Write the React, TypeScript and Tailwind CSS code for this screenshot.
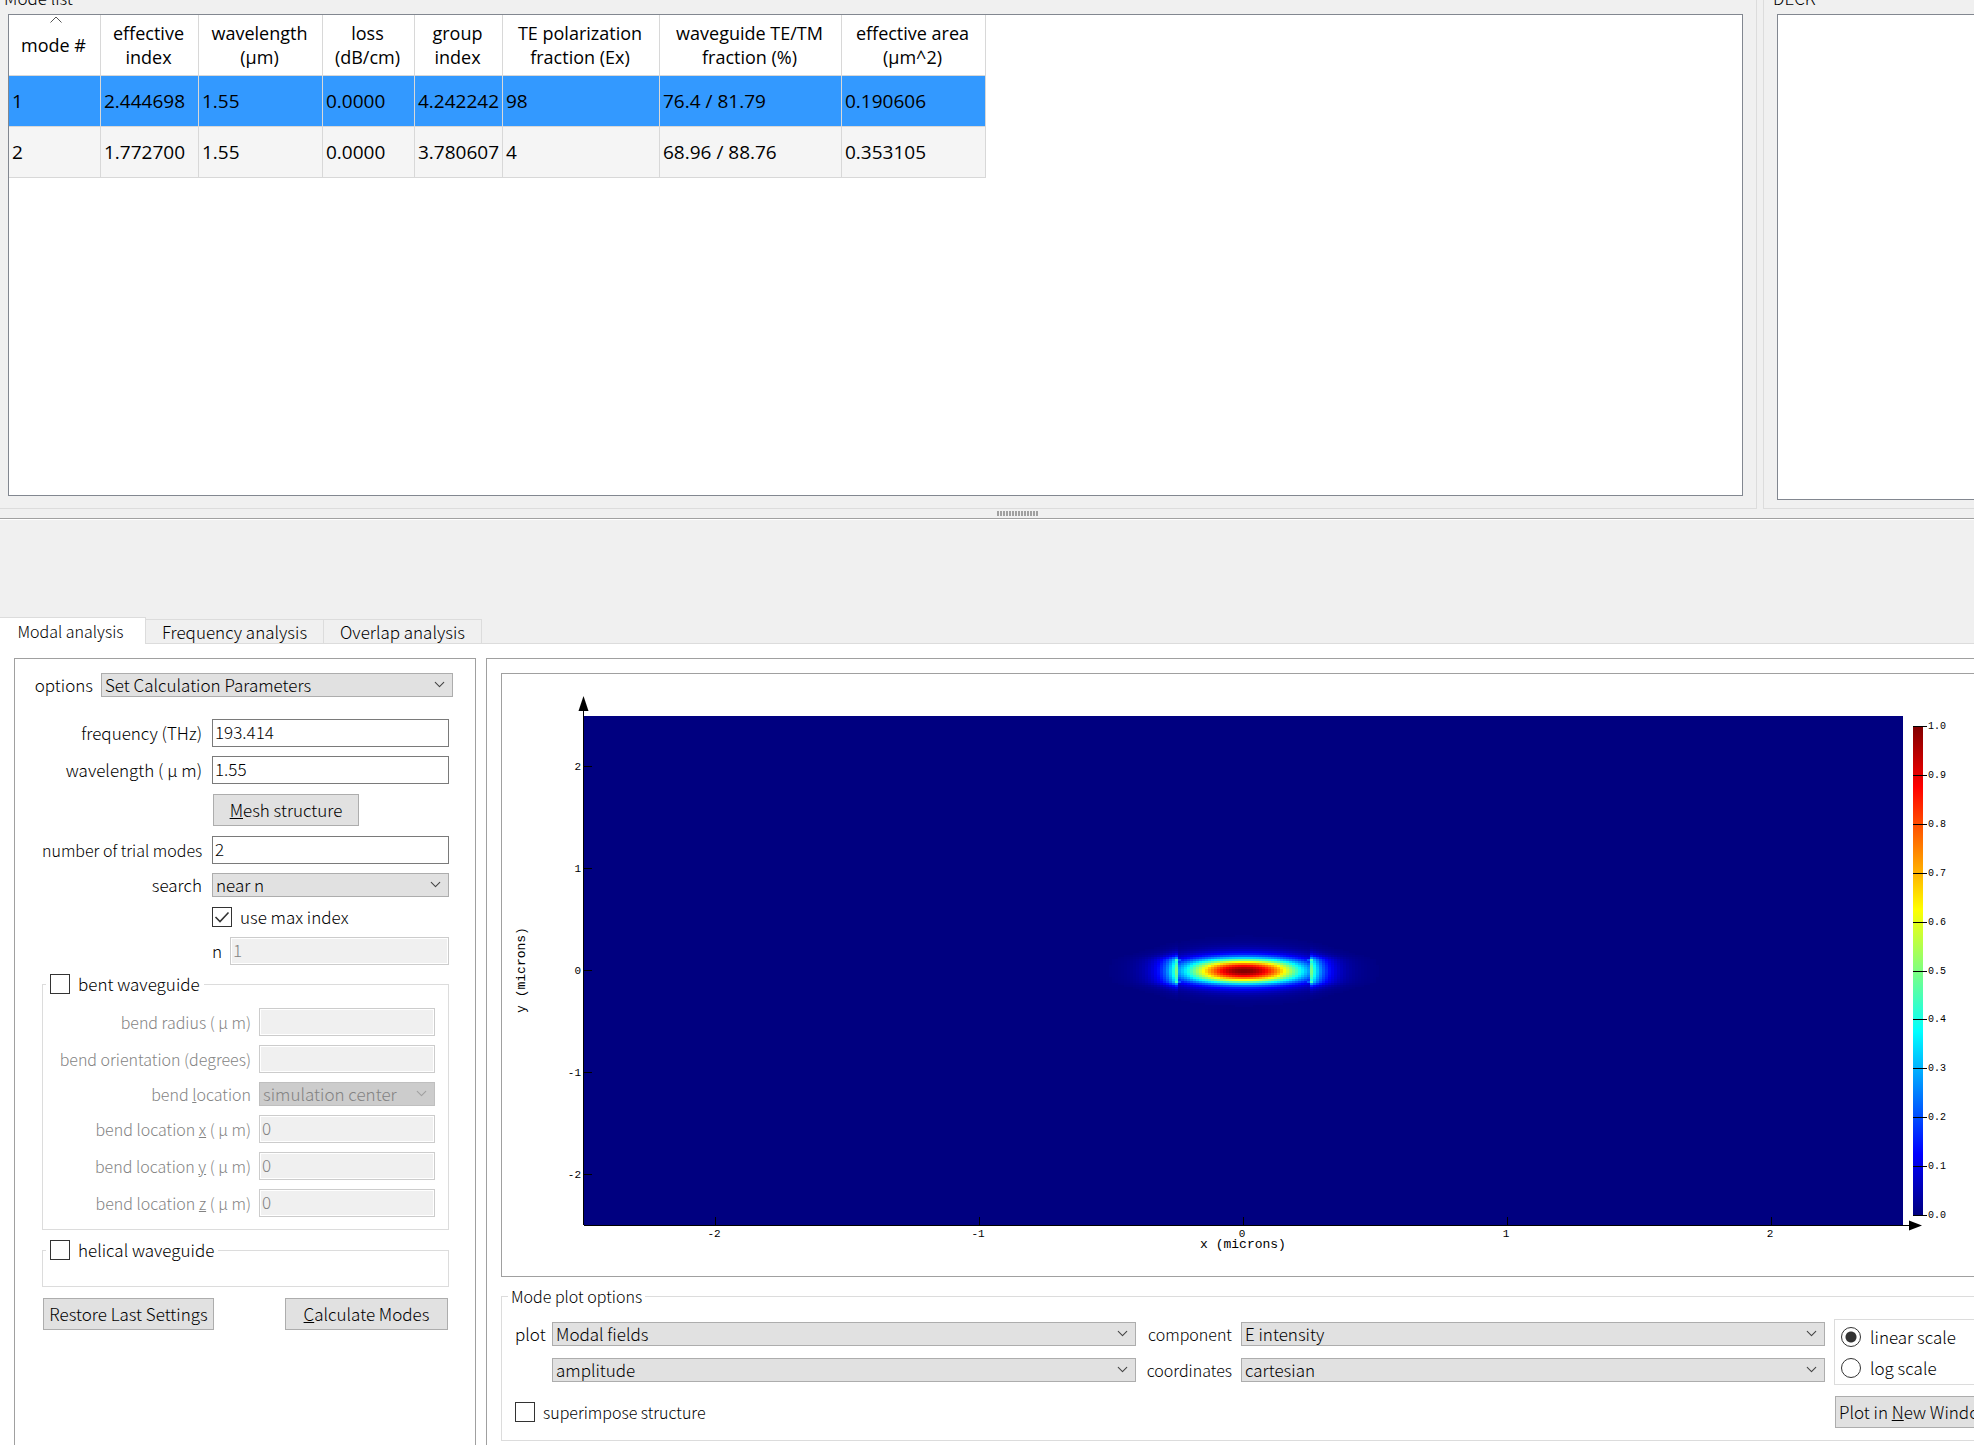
import type { ReactNode } from 'react';
import { ChevronDown } from 'lucide-react';
import clsx from 'clsx';

const COLUMNS = [
  { lines: ['mode #'], width: 'w-[92px]' },
  { lines: ['effective', 'index'], width: 'w-[98px]' },
  { lines: ['wavelength', '(µm)'], width: 'w-[124px]' },
  { lines: ['loss', '(dB/cm)'], width: 'w-[92px]' },
  { lines: ['group', 'index'], width: 'w-[88px]' },
  { lines: ['TE polarization', 'fraction (Ex)'], width: 'w-[157px]' },
  { lines: ['waveguide TE/TM', 'fraction (%)'], width: 'w-[182px]' },
  { lines: ['effective area', '(µm^2)'], width: 'w-[144px]' },
];

const MODES = [
  ['1', '2.444698', '1.55', '0.0000', '4.242242', '98', '76.4 / 81.79', '0.190606'],
  ['2', '1.772700', '1.55', '0.0000', '3.780607', '4', '68.96 / 88.76', '0.353105'],
];

function Select({ id, value, disabled, className }: { id: string; value: string; disabled?: boolean; className?: string }) {
  return (
    <div className={clsx('relative', className)}>
      <select
        id={id}
        aria-label={id}
        disabled={disabled}
        className={clsx(
          'block h-6 w-full appearance-none border pl-[3px] leading-[22px] opacity-100 outline-none',
          disabled ? 'border-[#bfbfbf] bg-[#cccccc] text-[#838383]' : 'border-[#adadad] bg-[#e1e1e1] text-black'
        )}
      >
        <option>{value}</option>
      </select>
      <ChevronDown
        className={clsx('pointer-events-none absolute right-[5px] top-[3px] h-[17px] w-[17px]', disabled ? 'text-[#a0a0a0]' : 'text-[#444]')}
        strokeWidth={1.5}
      />
    </div>
  );
}

function TextBox({ id, value, disabled, className }: { id: string; value: string; disabled?: boolean; className?: string }) {
  return (
    <input
      id={id}
      type="text"
      defaultValue={value}
      disabled={disabled}
      className={clsx(
        'block h-7 w-full min-w-0 border px-[2px] pb-1 outline-none',
        disabled ? 'border-[#cccccc] bg-[#f0f0f0] text-[#838383] shadow-[inset_0_0_0_1px_#fff]' : 'border-[#7a7a7a] bg-white',
        className
      )}
    />
  );
}

function CheckBox({ id, label, checked }: { id: string; label: string; checked?: boolean }) {
  return (
    <div className="flex h-5 items-center gap-2">
      <span className="relative h-5 w-5 shrink-0">
        <input id={id} type="checkbox" defaultChecked={checked} className="peer block h-5 w-5 appearance-none border border-[#333] bg-white" />
        <svg viewBox="0 0 20 20" className="pointer-events-none absolute inset-0 hidden h-5 w-5 peer-checked:block">
          <path d="M3.5 10 L8 14.5 L16.5 5.5" fill="none" stroke="#333" strokeWidth="1.6" />
        </svg>
      </span>
      <label htmlFor={id} className="leading-5">{label}</label>
    </div>
  );
}

function Button({ children, className }: { children: ReactNode; className?: string }) {
  return (
    <button type="button" className={clsx('h-8 whitespace-nowrap border border-[#adadad] bg-[#e1e1e1] leading-[30px]', className)}>
      {children}
    </button>
  );
}

function ModeTable() {
  return (
    <table className="w-[977px] table-fixed border-separate border-spacing-0 font-['Open_Sans','Noto_Sans',sans-serif] font-normal">
      <thead>
        <tr className="h-[61px] text-[18px]">
          {COLUMNS.map((col, i) => (
            <th key={i} className={clsx('relative border-b border-r border-[#d8d8d8] p-0 pr-[2px] align-middle font-normal leading-6', col.width)}>
              {i === 0 && (
                <svg viewBox="0 0 12 7" className="absolute left-[41px] top-px h-[7px] w-3">
                  <path d="M0.5 6.5 L6 1 L11.5 6.5" fill="none" stroke="#555" />
                </svg>
              )}
              {col.lines.map(line => (
                <div key={line} className="whitespace-nowrap">{line}</div>
              ))}
            </th>
          ))}
        </tr>
      </thead>
      <tbody className="text-[19px]">
        {MODES.map((row, r) => (
          <tr key={row[0]} className={clsx('h-[51px]', r === 0 ? 'bg-[#3399ff]' : 'bg-[#f5f5f5]')}>
            {row.map((cell, i) => (
              <td key={i} className="whitespace-nowrap border-b border-r border-[#d8d8d8] p-0 pl-[3px] align-middle">{cell}</td>
            ))}
          </tr>
        ))}
      </tbody>
    </table>
  );
}

const clamp = (v: number) => Math.max(0, Math.min(1, v));

function jet(v: number) {
  const r = Math.round(255 * clamp(1.5 - Math.abs(4 * v - 3)));
  const g = Math.round(255 * clamp(1.5 - Math.abs(4 * v - 2)));
  const b = Math.round(255 * clamp(1.5 - Math.abs(4 * v - 1)));
  return `rgb(${r},${g},${b})`;
}

// half size of the waveguide core
const CORE_X = 68;
const CORE_Y = 12;

function intensity(x: number, y: number) {
  const ax = Math.abs(x);
  const ay = Math.abs(y);
  const inside = ax < CORE_X - 2;
  const fx = inside ? 0.14 + 0.86 * Math.cos(0.0178 * ax) ** 2 : 0.48 * Math.exp(-(ax - CORE_X) / 14);
  const k = inside ? 0.073 : 0.05;
  const fy = ay <= CORE_Y ? Math.cos(k * ay) ** 2 : Math.cos(k * CORE_Y) ** 2 * Math.exp(-(ay - CORE_Y) / (inside ? 5 : 4));
  const corner = ax > CORE_X - 6 && ax < CORE_X + 1 && ay > 10 && ay < 12 ? 0.08 : 0;
  return Math.min(1, fx * fy + corner);
}

const CELL_W = 3;
const CELL_H = 2;
const cells: { x: number; y: number; fill: string }[] = [];
for (let x = -144; x < 144; x += CELL_W) {
  for (let y = -48; y < 48; y += CELL_H) {
    const v = intensity(x + CELL_W / 2, y + CELL_H / 2);
    if (v > 0.004) cells.push({ x, y, fill: jet(v) });
  }
}

const TICKS = [-2, -1, 0, 1, 2];

function FieldPlot() {
  return (
    <svg viewBox="0 0 1472 602" className="block w-full font-['Liberation_Mono',monospace]">
      <defs>
        <linearGradient id="jet" x1="0" y1="0" x2="0" y2="1">
          <stop offset="0" stopColor="#800000" />
          <stop offset="0.125" stopColor="#ff0000" />
          <stop offset="0.375" stopColor="#ffff00" />
          <stop offset="0.625" stopColor="#00ffff" />
          <stop offset="0.875" stopColor="#0000ff" />
          <stop offset="1" stopColor="#000080" />
        </linearGradient>
      </defs>

      <rect x="82" y="42" width="1319" height="509" fill="#000080" />
      <g transform="translate(742 297)" shapeRendering="crispEdges">
        {cells.map(c => (
          <rect key={`${c.x},${c.y}`} x={c.x} y={c.y} width={CELL_W} height={CELL_H} fill={c.fill} />
        ))}
      </g>

      {/* axes */}
      <g fill="#000" shapeRendering="crispEdges">
        <rect x="81" y="36" width="1" height="515" />
        <rect x="82" y="551" width="1326" height="1" />
        {TICKS.map(t => (
          <rect key={`x${t}`} x={741 + t * 264} y="543" width="1" height="8" />
        ))}
        {TICKS.map(t => (
          <rect key={`y${t}`} x="82" y={296 - t * 102} width="8" height="1" />
        ))}
      </g>
      <path d="M81.5 22 L86.5 37 H76.5 Z" />
      <path d="M1420 551.5 L1407 546.5 V556.5 Z" />
      <g fontSize="11">
        {TICKS.map(t => (
          <text key={`x${t}`} x={740 + t * 264} y="563" textAnchor="middle">{t}</text>
        ))}
        {TICKS.map(t => (
          <text key={`y${t}`} x="79" y={300 - t * 102} textAnchor="end">{t}</text>
        ))}
      </g>
      <text x="741" y="574" fontSize="13" textAnchor="middle">x (microns)</text>
      <text transform="translate(23 296) rotate(-90)" fontSize="13" textAnchor="middle">y (microns)</text>

      {/* colour scale */}
      <rect x="1411" y="52" width="10" height="489" fill="url(#jet)" />
      <g fontSize="10">
        {Array.from({ length: 11 }, (_, i) => (
          <g key={i}>
            <rect x="1411" y={Math.round(541 - i * 48.9)} width="14" height="1" shapeRendering="crispEdges" />
            <text x="1426" y={Math.round(544 - i * 48.9)}>{(i / 10).toFixed(1)}</text>
          </g>
        ))}
      </g>
    </svg>
  );
}

function BendLabel({ id, children }: { id: string; children: ReactNode }) {
  return <label htmlFor={id} className="whitespace-nowrap text-right text-base text-[#838383]">{children}</label>;
}

function SettingsPanel() {
  return (
    <section className="w-[462px] shrink-0 border border-b-0 border-[#a0a0a0] pl-[27px] pr-[26px] pt-[14px]">
      <div className="-ml-2 -mr-1 flex items-center justify-end gap-2">
        <label htmlFor="options">options</label>
        <Select id="options" value="Set Calculation Parameters" className="w-[352px] shrink-0" />
      </div>

      <div className="mt-[22px] grid grid-cols-[160px_1fr] items-center gap-x-[10px] gap-y-[9px]">
        <label htmlFor="frequency" className="text-right">frequency (THz)</label>
        <TextBox id="frequency" value="193.414" />
        <label htmlFor="wavelength" className="text-right">wavelength ( μ m)</label>
        <TextBox id="wavelength" value="1.55" />
        <div className="col-start-2 px-px py-px">
          <Button className="w-[146px]"><u>M</u>esh structure</Button>
        </div>
        <label htmlFor="trial" className="whitespace-nowrap text-right text-base">number of trial modes</label>
        <TextBox id="trial" value="2" />
        <label htmlFor="search" className="text-right">search</label>
        <Select id="search" value="near n" />
        <div className="col-start-2 py-px">
          <CheckBox id="max-index" label="use max index" checked />
        </div>
        <div className="col-start-2 flex items-center gap-2">
          <label htmlFor="n">n</label>
          <TextBox id="n" value="1" disabled />
        </div>
      </div>

      <fieldset className="mt-[9px] min-w-0 border border-[#dcdcdc] pb-3 pl-3 pr-[13px]">
        <legend className="-ml-[9px] px-1">
          <CheckBox id="bent" label="bent waveguide" />
        </legend>
        <div className="mt-[14px] grid grid-cols-[1fr_176px] items-center gap-x-2 gap-y-[9px]">
          <BendLabel id="radius">bend radius ( μ m)</BendLabel>
          <TextBox id="radius" value="" disabled />
          <BendLabel id="orientation">bend orientation (degrees)</BendLabel>
          <TextBox id="orientation" value="" disabled />
          <BendLabel id="location">bend <u>l</u>ocation</BendLabel>
          <Select id="location" value="simulation center" disabled />
          <BendLabel id="loc-x">bend location <u>x</u> ( μ m)</BendLabel>
          <TextBox id="loc-x" value="0" disabled />
          <BendLabel id="loc-y">bend location <u>y</u> ( μ m)</BendLabel>
          <TextBox id="loc-y" value="0" disabled />
          <BendLabel id="loc-z">bend location <u>z</u> ( μ m)</BendLabel>
          <TextBox id="loc-z" value="0" disabled />
        </div>
      </fieldset>

      <fieldset className="mt-[10px] h-[47px] border border-[#dcdcdc] pl-3">
        <legend className="-ml-[9px] px-1">
          <CheckBox id="helical" label="helical waveguide" />
        </legend>
      </fieldset>

      <div className="mt-[11px] flex justify-between px-px">
        <Button className="w-[171px]">Restore Last Settings</Button>
        <Button className="w-[163px]"><u>C</u>alculate Modes</Button>
      </div>
    </section>
  );
}

function Radio({ id, label, checked }: { id: string; label: string; checked?: boolean }) {
  return (
    <div className="flex items-center gap-[9px]">
      <input
        id={id}
        type="radio"
        name="scale"
        defaultChecked={checked}
        className="h-5 w-5 shrink-0 appearance-none rounded-full border border-[#333] bg-white checked:bg-[radial-gradient(circle,#333_0_5px,#fff_6px)]"
      />
      <label htmlFor={id} className="whitespace-nowrap leading-5">{label}</label>
    </div>
  );
}

function PlotOptions() {
  return (
    <fieldset className="mt-[9px] border border-r-0 border-[#dcdcdc] pb-3 pl-[13px]">
      <legend className="-ml-[7px] px-[3px] text-base leading-5">Mode plot options</legend>
      <div className="flex pt-[13px]">
        <div className="min-w-0 flex-1">
          <div className="grid grid-cols-[28px_1fr_87px_1fr] items-center gap-x-[9px] gap-y-3 pt-[3px]">
            <label htmlFor="plot">plot</label>
            <Select id="plot" value="Modal fields" />
            <label htmlFor="component" className="text-right text-base">component</label>
            <Select id="component" value="E intensity" />
            <Select id="quantity" value="amplitude" className="col-start-2" />
            <label htmlFor="coordinates" className="text-right text-base">coordinates</label>
            <Select id="coordinates" value="cartesian" />
          </div>
          <div className="mt-5 text-base">
            <CheckBox id="superimpose" label="superimpose structure" />
          </div>
        </div>
        <div className="-mr-5 ml-[9px] w-[160px] shrink-0">
          <div className="flex h-[66px] flex-col justify-center gap-[11px] border border-[#dcdcdc] pl-[6px]">
            <Radio id="linear" label="linear scale" checked />
            <Radio id="log" label="log scale" />
          </div>
          <Button className="ml-px mt-[11px] w-full pl-[3px] text-left">Plot in <u>N</u>ew Window</Button>
        </div>
      </div>
    </fieldset>
  );
}

export default function App() {
  return (
    <div className="flex min-h-screen flex-col overflow-hidden bg-[#f0f0f0] font-['Noto_Sans_CJK_JP',sans-serif] text-[17px] font-light leading-6 text-black">
      <div className="flex gap-[6px]">
        <section className="min-w-0 flex-1 border-b border-r border-[#dcdcdc] pb-3 pl-2 pr-[13px]">
          <h2 className="-ml-1 flex h-[14px] items-end overflow-hidden pb-[7px] leading-[18px]">Mode list</h2>
          <div className="h-[482px] border border-[#828790] bg-white">
            <ModeTable />
          </div>
        </section>
        <section className="w-[211px] shrink-0 border-b border-l border-[#dcdcdc] pb-2 pl-[13px]">
          <h2 className="-ml-1 flex h-[14px] items-end overflow-hidden pb-[7px] leading-[18px]">DECK</h2>
          <div className="h-[486px] border border-r-0 border-[#828790] bg-white" />
        </section>
      </div>

      <div className="flex h-[10px] items-center justify-center border-b border-[#a0a0a0] pl-[62px]">
        <div className="h-[5px] w-[42px] bg-[repeating-linear-gradient(90deg,#a0a0a0_0_2px,#f0f0f0_2px_3px)]" />
      </div>
      <div className="h-px bg-white" />

      <div role="tablist" className="mt-[97px] flex items-end border-b border-[#dcdcdc]">
        <button role="tab" aria-selected="true" className="-mb-px h-[27px] w-[146px] border-r border-t border-[#dcdcdc] bg-white pr-1 text-base leading-6">Modal analysis</button>
        <button role="tab" aria-selected="false" className="h-[24px] w-[178px] border-r border-t border-[#dcdcdc] leading-[24px]">Frequency analysis</button>
        <button role="tab" aria-selected="false" className="h-[24px] w-[158px] border-r border-t border-[#dcdcdc] leading-[24px]">Overlap analysis</button>
      </div>

      <div className="flex flex-1 gap-[10px] bg-white pl-[14px] pt-[14px]">
        <SettingsPanel />
        <section className="min-w-0 flex-1 border-l border-t border-[#a0a0a0] pl-[14px] pt-[14px]">
          <div className="border border-r-0 border-[#a0a0a0]">
            <FieldPlot />
          </div>
          <PlotOptions />
        </section>
      </div>
    </div>
  );
}
